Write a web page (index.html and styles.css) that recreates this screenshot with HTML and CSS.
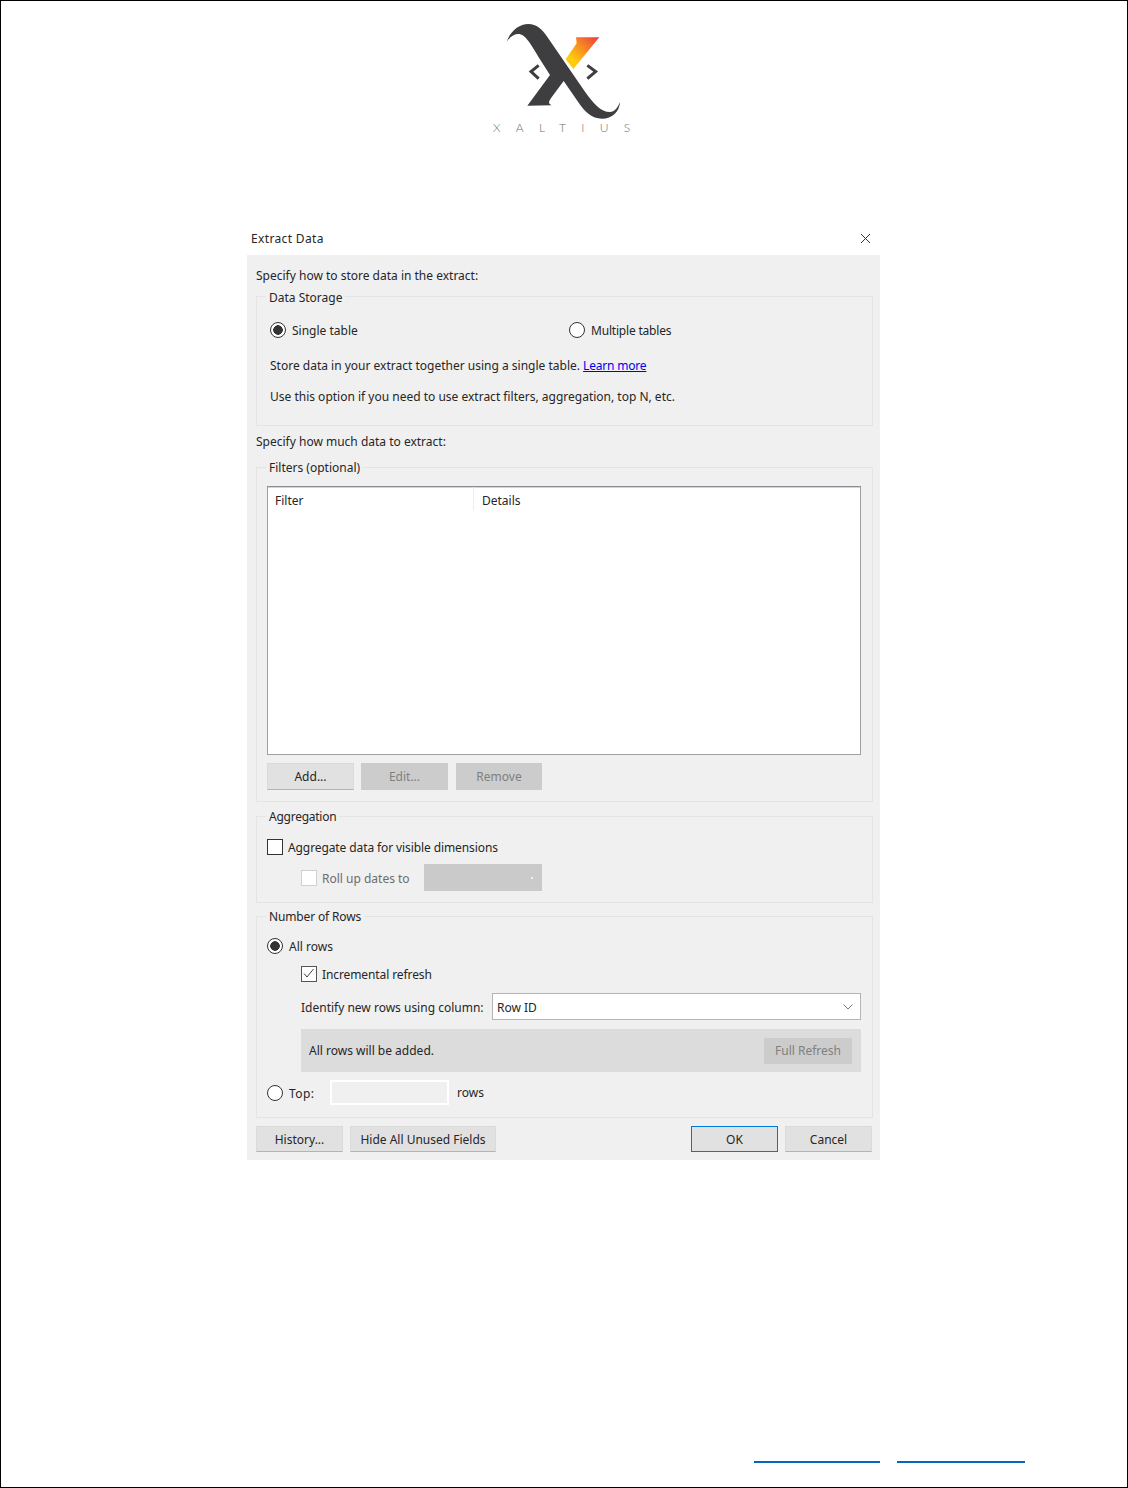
FILE: index.html
```html
<!DOCTYPE html>
<html>
<head>
    <title>Extract Data</title>
    <link rel="stylesheet" href="styles.css">
</head>
<body>
    <div class="page">
        <!-- Logo -->
        <div class="logo">
            <svg class="logo-mark" width="180" height="100" viewBox="0 60 540 300">
                <defs>
                    <linearGradient id="flame" x1="0" y1="1" x2="1" y2="0">
                        <stop offset="0.25" stop-color="#ffcc0d"/>
                        <stop offset="1" stop-color="#ee3a3c"/>
                    </linearGradient>
                </defs>
                <path fill="#3e3d3f" d="M110 125 C122 92 148 72 175 72 C200 72 216 88 230 108 L345 275 C370 310 392 336 420 336 C434 336 444 322 450 305 C449 335 426 356 396 356 C365 356 345 336 325 307 L281 243 L246 290 C236 303 233 311 245 316 L172 317 L240 225 L205 170 C190 145 175 118 160 107 C145 97 125 103 110 125 Z"/>
                <path fill="url(#flame)" d="M287 178 L320 130 L318 112 L388 112 L310 207 Z"/>
                <path fill="none" stroke="#3e3d3f" stroke-width="9" d="M206 196 L183 215 L206 236"/>
                <path fill="none" stroke="#3e3d3f" stroke-width="9" d="M352 196 L377 215 L352 236"/>
            </svg>
            <div class="logo-text">XALTIUS</div>
        </div>

        <div class="dialog">
            <div class="dialog-title">
                <span>Extract Data</span>
                <svg width="11" height="11" viewBox="0 0 11 11"><path fill="none" stroke="#333" d="M1 1 L10 10 M10 1 L1 10"/></svg>
            </div>
            <div class="dialog-body">
                <div class="line first">Specify how to store data in the extract:</div>

                <fieldset class="group storage">
                    <legend>Data Storage</legend>
                    <div class="storage-options">
                        <label class="opt opt-single"><span class="radio on"></span>Single table</label>
                        <label class="opt opt-multi"><span class="radio"></span>Multiple tables</label>
                    </div>
                    <div class="line store-a">Store data in your extract together using a single table. <a href="#">Learn more</a></div>
                    <div class="line store-b">Use this option if you need to use extract filters, aggregation, top N, etc.</div>
                </fieldset>

                <div class="line how-much">Specify how much data to extract:</div>

                <fieldset class="group filters">
                    <legend>Filters (optional)</legend>
                    <div class="filter-table">
                        <div class="filter-head">
                            <span class="col-filter">Filter</span>
                            <span class="col-details">Details</span>
                        </div>
                    </div>
                    <div class="filter-buttons">
                        <button class="btn">Add...</button>
                        <button class="btn off">Edit...</button>
                        <button class="btn off">Remove</button>
                    </div>
                </fieldset>

                <fieldset class="group aggregation">
                    <legend>Aggregation</legend>
                    <label class="opt agg-row"><span class="check"></span>Aggregate data for visible dimensions</label>
                    <div class="rollup">
                        <label class="opt muted"><span class="check faint"></span>Roll up dates to</label>
                        <div class="rollup-select"><span class="tiny-arrow"></span></div>
                    </div>
                </fieldset>

                <fieldset class="group rows">
                    <legend>Number of Rows</legend>
                    <label class="opt all-rows"><span class="radio on"></span>All rows</label>
                    <label class="opt incremental">
                        <span class="check small">
                            <svg width="13" height="13" viewBox="0 0 13 13"><path fill="none" stroke="#444" d="M2 6.5 L5 10 L11.5 2"/></svg>
                        </span>Incremental refresh
                    </label>
                    <div class="identify">
                        <span class="identify-label">Identify new rows using column:</span>
                        <div class="select">
                            <span class="select-value">Row ID</span>
                            <svg width="10" height="6" viewBox="0 0 10 6"><path fill="none" stroke="#777" d="M0.5 0.5 L5 5 L9.5 0.5"/></svg>
                        </div>
                    </div>
                    <div class="refresh-bar">
                        <span>All rows will be added.</span>
                        <button class="btn off refresh">Full Refresh</button>
                    </div>
                    <div class="top-row">
                        <label class="opt"><span class="radio"></span>Top:</label>
                        <div class="top-input"></div>
                        <span class="top-unit">rows</span>
                    </div>
                </fieldset>

                <div class="dialog-buttons">
                    <button class="btn history">History...</button>
                    <button class="btn hide-fields">Hide All Unused Fields</button>
                    <button class="btn ok">OK</button>
                    <button class="btn cancel">Cancel</button>
                </div>
            </div>
        </div>

        <!-- Garis biru di bawah halaman -->
        <div class="footer-links">
            <span class="rule rule-a"></span>
            <span class="rule rule-b"></span>
        </div>
    </div>
</body>
</html>
```

FILE: styles.css
```css
* {
    box-sizing: border-box;
}
body {
    margin: 0;
    background: #fff;
    font-family: "Noto Sans", sans-serif;
    font-size: 12px;
    line-height: 16px;
    color: #262626;
}
.page {
    width: 1128px;
    height: 1488px;
    border: 1px solid #000;
    display: flex;
    flex-direction: column;
}

/* logo */
.logo {
    height: 224px;
    padding-top: 19px;
    margin-left: 469px;
}
.logo-mark {
    display: block;
}
.logo-text {
    margin: 0 0 0 23px;
    font-family: "Lato", sans-serif;
    font-weight: 300;
    font-size: 12px;
    line-height: 16px;
    letter-spacing: 15.3px;
    color: #707074;
}

/* dialog */
.dialog {
    width: 633px;
    margin-left: 246px;
}
.dialog-title {
    height: 30px;
    padding: 0 9px 7px 4px;
    display: flex;
    justify-content: space-between;
    align-items: flex-end;
}
.dialog-title span {
    line-height: 18px;
    letter-spacing: 0.35px;
}
.dialog-title svg {
    margin-bottom: 4px;
}
.dialog-body {
    background: #f0f0f0;
    padding: 12px 7px 8px 9px;
}
.line {
    height: 16px;
    line-height: 18px;
    white-space: nowrap;
}
.how-much {
    margin-top: 7px;
}
a {
    color: #0000ee;
    letter-spacing: -0.2px;
}

/* groups */
.group {
    margin: 0;
    padding: 0 10px;
    border: 1px solid #e4e4e4;
    min-width: 0;
}
.group legend {
    margin-left: -1px;
    padding: 0 3px;
    height: 14px;
    line-height: 16px;
    color: #262626;
}
.storage {
    margin-top: 7px;
    padding-bottom: 21px;
}
.group.storage legend {
    height: 12px;
}
.storage-options {
    margin-top: 20px;
    display: flex;
}
.opt {
    display: flex;
    align-items: flex-start;
    height: 16px;
    line-height: 18px;
    white-space: nowrap;
}
.opt-single {
    width: 299px;
    margin-left: 3px;
}
.opt-multi {
    letter-spacing: -0.2px;
}
.store-a {
    margin: 19px 0 0 3px;
}
.store-b {
    margin: 15px 0 0 3px;
}
.filters {
    margin-top: 11px;
    padding-bottom: 11px;
}
.aggregation {
    margin-top: 7px;
    padding-bottom: 11px;
}
.group.aggregation legend {
    letter-spacing: -0.25px;
}
.rows {
    margin-top: 6px;
    padding-bottom: 12px;
}
.group.rows legend {
    letter-spacing: -0.15px;
}

/* radio and checkbox */
.radio {
    width: 16px;
    height: 16px;
    margin-right: 6px;
    border: 1px solid #333;
    border-radius: 50%;
    background: #fff;
    flex: none;
}
.radio.on {
    background: radial-gradient(circle, #333 0 4.5px, #fff 5px);
}
.check {
    width: 16px;
    height: 16px;
    margin-right: 5px;
    border: 1px solid #333;
    background: #fff;
    flex: none;
    display: flex;
}
.check.faint {
    border-color: #d0d0d0;
}
.check.small {
    border-color: #555;
}
.muted {
    color: #6d6d6d;
}

/* filter table */
.filter-table {
    height: 269px;
    margin-top: 12px;
    margin-right: 1px;
    background: #fff;
    border: 1px solid #a0a0a0;
    border-top-color: #8c8c94;
    box-shadow: inset 0 1px #d4d4da;
}
.filter-head {
    display: flex;
    height: 24px;
}
.col-filter {
    width: 206px;
    padding: 6px 0 0 7px;
    border-right: 1px solid #ededed;
}
.col-details {
    padding: 6px 0 0 8px;
}
.filter-buttons {
    display: flex;
    margin-top: 8px;
    gap: 7px;
}
.filter-buttons .btn {
    width: 87px;
    height: 27px;
}
.filter-buttons .btn:last-child {
    width: 86px;
    margin-left: 1px;
}

/* buttons */
.btn {
    font-family: inherit;
    font-size: 12px;
    line-height: 16px;
    padding: 0;
    color: #262626;
    background: #e1e1e1;
    border: 1px solid #dadada;
    border-bottom-color: #b4b4b4;
}
.btn.off {
    background: #cccccc;
    border-color: #cccccc;
    color: #808080;
}

/* aggregation */
.agg-row {
    margin-top: 16px;
    letter-spacing: -0.1px;
}
.rollup {
    margin: 9px 0 0 34px;
    display: flex;
    align-items: center;
}
.rollup .opt {
    width: 123px;
}
.rollup-select {
    width: 118px;
    height: 27px;
    background: #cacaca;
    display: flex;
    justify-content: flex-end;
    align-items: center;
    padding-right: 9px;
}
.tiny-arrow {
    width: 2px;
    height: 2px;
    background: #eee;
}

/* number of rows */
.all-rows {
    margin-top: 15px;
}
.incremental {
    margin: 12px 0 0 34px;
    letter-spacing: -0.1px;
}
.identify {
    margin: 11px 0 0 34px;
    display: flex;
    align-items: center;
}
.identify-label {
    width: 191px;
    padding-top: 2px;
    white-space: nowrap;
}
.select {
    width: 369px;
    height: 27px;
    background: #fff;
    border: 1px solid #b5b5b5;
    padding: 0 7px 0 4px;
    display: flex;
    justify-content: space-between;
    align-items: center;
}
.select-value {
    padding-top: 2px;
}
.refresh-bar {
    margin: 9px 0 0 34px;
    width: 560px;
    height: 43px;
    background: #dcdcdc;
    padding: 0 9px 0 8px;
    display: flex;
    justify-content: space-between;
    align-items: center;
}
.refresh {
    width: 88px;
    height: 26px;
}
.top-row {
    margin-top: 8px;
    display: flex;
    align-items: center;
    height: 25px;
}
.top-row .opt {
    width: 63px;
    letter-spacing: 0.4px;
}
.top-row .radio {
    margin-right: 6px;
}
.top-input {
    width: 119px;
    height: 25px;
    margin-right: 8px;
    border: 2px solid #fff;
    background: #f0f0f0;
}
.top-unit {
    padding-top: 1px;
}

/* bottom buttons */
.dialog-buttons {
    margin-top: 8px;
    padding-right: 1px;
    display: flex;
}
.dialog-buttons .btn {
    height: 26px;
    width: 87px;
    padding-top: 1px;
}
.dialog-buttons .hide-fields {
    width: 146px;
    margin-left: 7px;
}
.dialog-buttons .ok {
    margin-left: auto;
    border-color: #0078d7;
}
.dialog-buttons .cancel {
    margin-left: 7px;
}

/* footer rules */
.footer-links {
    margin-top: auto;
    margin-bottom: 24px;
    margin-left: 753px;
    display: flex;
}
.rule {
    height: 2px;
    background: #0563c1;
}
.rule-a {
    width: 126px;
}
.rule-b {
    width: 128px;
    margin-left: 17px;
}
```
